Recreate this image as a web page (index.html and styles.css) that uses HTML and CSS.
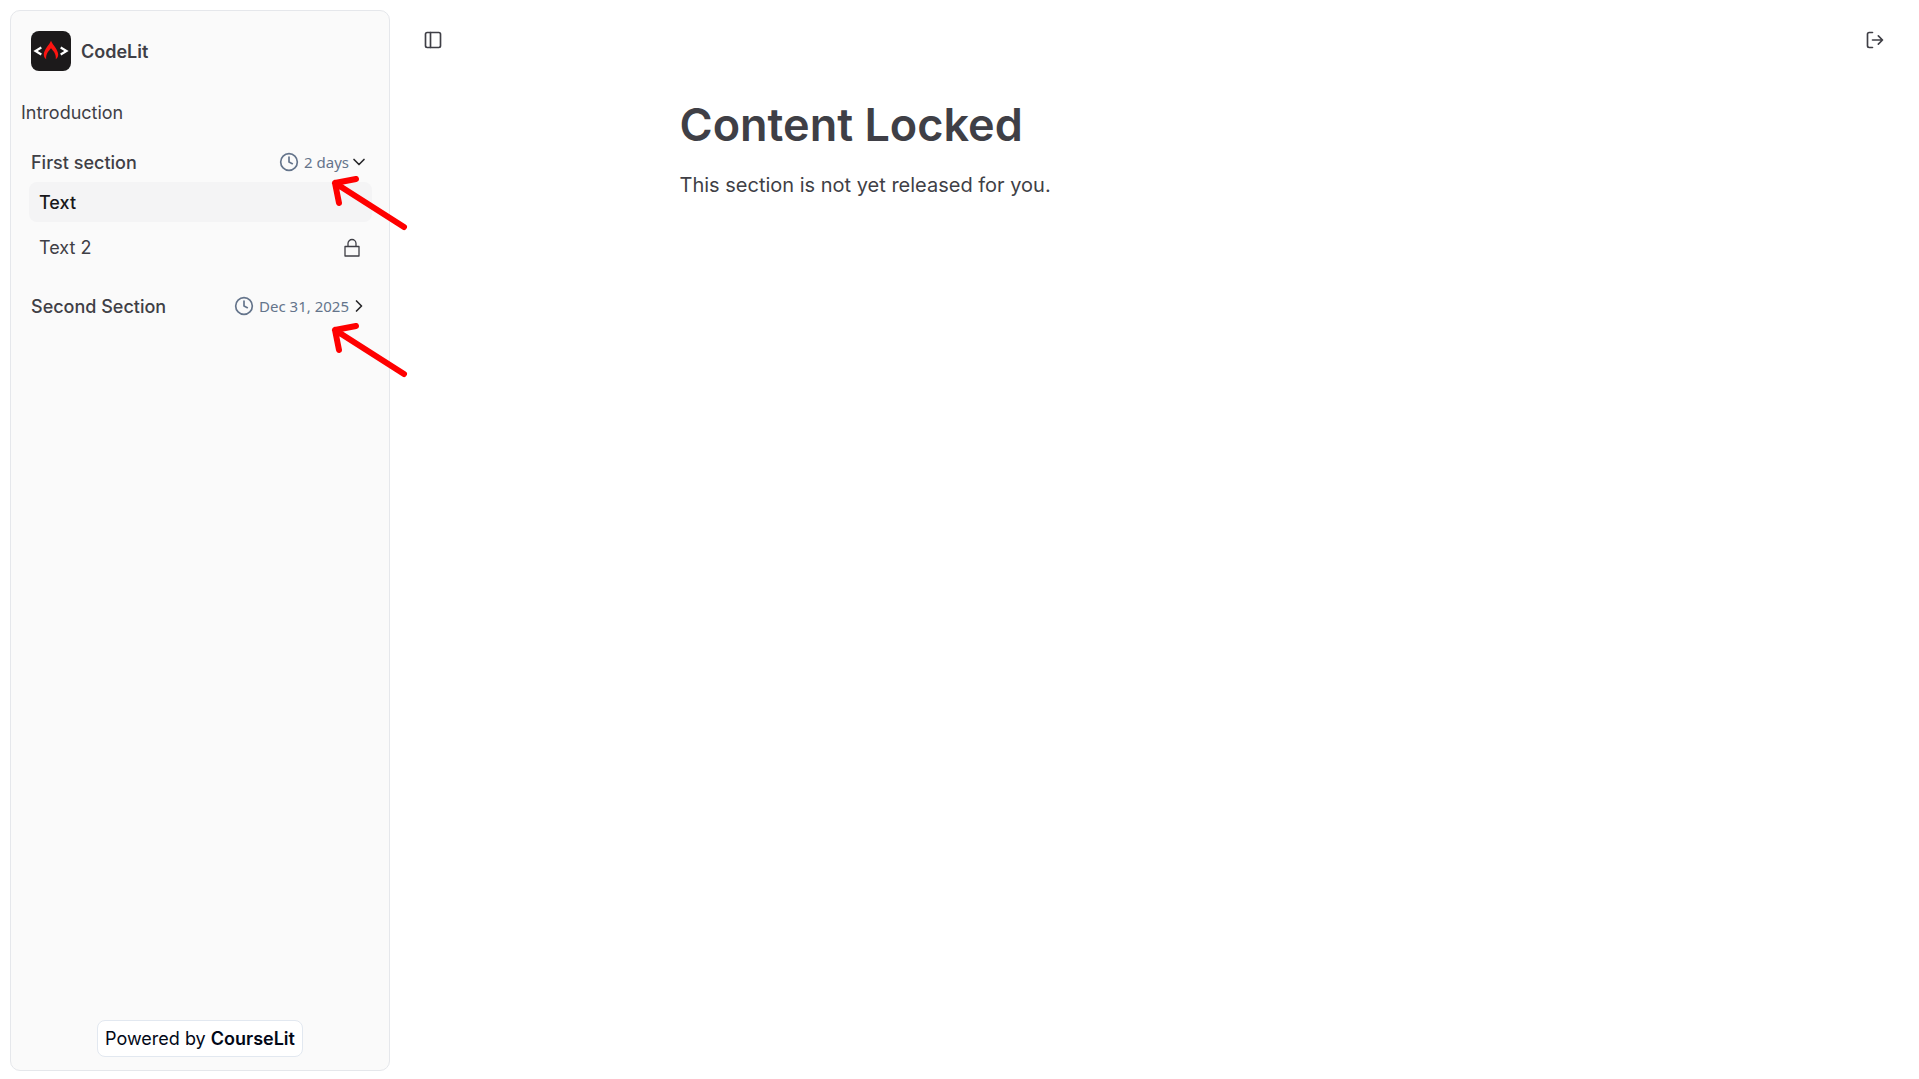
FILE: index.html
```html
<!DOCTYPE html>
<html lang="en">
<head>
<meta charset="utf-8">
<meta name="viewport" content="width=device-width, initial-scale=1">
<title>CodeLit</title>
<link rel="stylesheet" href="styles.css">
</head>
<body>
<div class="app">
  <aside class="sidebar">
    <a class="brand" href="#">
      <svg class="logo" viewBox="0 0 40 40" aria-hidden="true">
        <rect width="40" height="40" rx="8" fill="#1c1a1b"/>
        <path d="M10.300 16.500L4.500 20l5.800 3.500M29.700 16.500l5.800 3.500-5.800 3.500" fill="none" stroke="#fff" stroke-width="2.200"/>
        <path d="M20 9.800c1.500 4 7.200 9 7.200 13.700 0 2-.8 3.500-2.400 4.800.6-5.500-2.400-8-4.800-11-2.400 3-5.400 5.500-4.800 11-1.600-1.300-2.400-2.800-2.400-4.800C12.800 18.800 18.500 13.800 20 9.800z" fill="#fb1411"/>
      </svg>
      <span>CodeLit</span>
    </a>
    <nav class="nav" aria-label="Course">
      <a class="intro" href="#">Introduction</a>
      <section class="group">
        <button class="group-head" type="button" aria-expanded="true">
          <span class="group-title">First section</span>
          <span class="release">
            <svg class="clock" viewBox="0 0 24 24" aria-hidden="true"><circle cx="12" cy="12" r="10"/><path d="M12 6v6l4 2"/></svg>
            <span>2 days</span>
            <svg class="chevron" viewBox="0 0 24 24" aria-hidden="true"><path d="m6 9 6 6 6-6"/></svg>
          </span>
        </button>
        <ul class="lessons">
          <li><a class="lesson active" href="#" aria-current="page">Text</a></li>
          <li><a class="lesson" href="#">Text 2
            <svg class="lock" viewBox="0 0 20 20" aria-hidden="true"><path d="M3 8.500h14v9.500H3zM6 8.500v-3a4 4 0 0 1 8 0v3"/></svg></a></li>
        </ul>
      </section>
      <section class="group">
        <button class="group-head" type="button" aria-expanded="false">
          <span class="group-title">Second Section</span>
          <span class="release">
            <svg class="clock" viewBox="0 0 24 24" aria-hidden="true"><circle cx="12" cy="12" r="10"/><path d="M12 6v6l4 2"/></svg>
            <span>Dec 31, 2025</span>
            <svg class="chevron" viewBox="0 0 24 24" aria-hidden="true"><path d="m9 6 6 6-6 6"/></svg>
          </span>
        </button>
      </section>
    </nav>
    <a class="powered" href="#">Powered by <strong>CourseLit</strong></a>
    <svg class="arrow arrow-first" viewBox="0 0 90 60" aria-hidden="true"><path d="M78 51L9 7M30 3L9 7l4 20"/></svg>
    <svg class="arrow arrow-second" viewBox="0 0 90 60" aria-hidden="true"><path d="M78 51L9 7M30 3L9 7l4 20"/></svg>
  </aside>
  <main class="main">
    <header class="topbar">
      <button class="icon-button" type="button" aria-label="Toggle sidebar">
        <svg viewBox="0 0 24 24" aria-hidden="true"><rect x="3" y="3" width="18" height="18" rx="2"/><path d="M9 3v18"/></svg>
      </button>
      <a class="icon-button" href="#" aria-label="Exit course">
        <svg viewBox="0 0 24 24" aria-hidden="true"><path d="M9 21H5a2 2 0 0 1-2-2V5a2 2 0 0 1 2-2h4M16 17l5-5-5-5M21 12H9"/></svg>
      </a>
    </header>
    <article class="content">
      <h1>Content Locked</h1>
      <p>This section is not yet released for you.</p>
    </article>
  </main>
</div>
</body>
</html>
```
FILE: styles.css
```css
*, *::before, *::after { box-sizing: border-box; }

body {
  margin: 0;
  background: #fff;
  color: #3f3f46;
  font: 18px/25px Inter, "Liberation Sans", sans-serif;
}

a { color: inherit; text-decoration: none; }

button {
  padding: 0;
  border: 0;
  background: none;
  color: inherit;
  font: inherit;
  cursor: pointer;
}

svg { display: block; flex: none; fill: none; stroke: currentColor; stroke-width: 2; stroke-linejoin: round; stroke-linecap: round; }

.app {
  display: flex;
  min-height: 100vh;
  padding: 10px 0 8px 10px;
}

.sidebar {
  position: relative;
  display: flex;
  flex: none;
  flex-direction: column;
  width: 380px;
  padding: 10px;
  border: 1px solid #e5e7eb;
  border-radius: 10px;
  background: #fafafa;
}

.brand {
  display: flex;
  align-items: center;
  gap: 10px;
  padding: 10px;
  font-weight: 600;
}

.logo { width: 40px; height: 40px; stroke: none; stroke-linecap: butt; stroke-linejoin: miter; }

.nav { flex: 1; padding-top: 10px; }

.intro { display: block; padding: 9px 0 7px; }

.group { padding: 10px 7px 9px 8px; }

.group-head {
  display: flex;
  align-items: center;
  justify-content: space-between;
  width: 100%;
  height: 40px;
  padding: 0 3px 0 2px;
  font-weight: 500;
}

.release {
  display: flex;
  align-items: center;
  color: #64748b;
  font: 400 15px/20px "Noto Sans", sans-serif;
}

.clock { width: 20px; height: 20px; margin-right: 5px; }
.chevron { width: 20px; height: 20px; color: #27272a; }

.lessons {
  display: grid;
  gap: 5px;
  margin: 0;
  padding: 0;
  list-style: none;
}

.lesson {
  display: flex;
  align-items: center;
  justify-content: space-between;
  height: 40px;
  padding: 1px 10px 0;
  border-radius: 8px;
}

.lesson.active { background: #f4f4f5; color: #18181b; font-weight: 500; }

.lock { width: 20px; height: 20px; stroke-width: 1.3; }

.powered {
  align-self: center;
  margin-bottom: 3px;
  padding: 5px 7px;
  border: 1px solid #e2e8f0;
  border-radius: 8px;
  background: #fff;
  color: #020817;
}

.powered strong { font-weight: 600; }

/* Red pointers drawn over the release dates */
.arrow {
  position: absolute;
  left: 315px;
  width: 90px;
  height: 60px;
  color: #f00;
  stroke-width: 6;
}

.arrow-first { top: 165px; }
.arrow-second { top: 312px; }

.main { flex: 1; min-width: 0; padding-left: 10px; }

.topbar {
  display: flex;
  align-items: center;
  justify-content: space-between;
  height: 60px;
  padding: 0 26px 0 15px;
}

.icon-button {
  display: grid;
  place-items: center;
  width: 36px;
  height: 36px;
}

.icon-button svg { width: 20px; height: 20px; }

.content { max-width: 960px; margin: 0 auto; padding-top: 30px; }

h1 { margin: 0; font-size: 45px; line-height: 50px; font-weight: 600; }

.content p { margin: 20px 0 0; font-size: 20px; line-height: 30px; }
```
